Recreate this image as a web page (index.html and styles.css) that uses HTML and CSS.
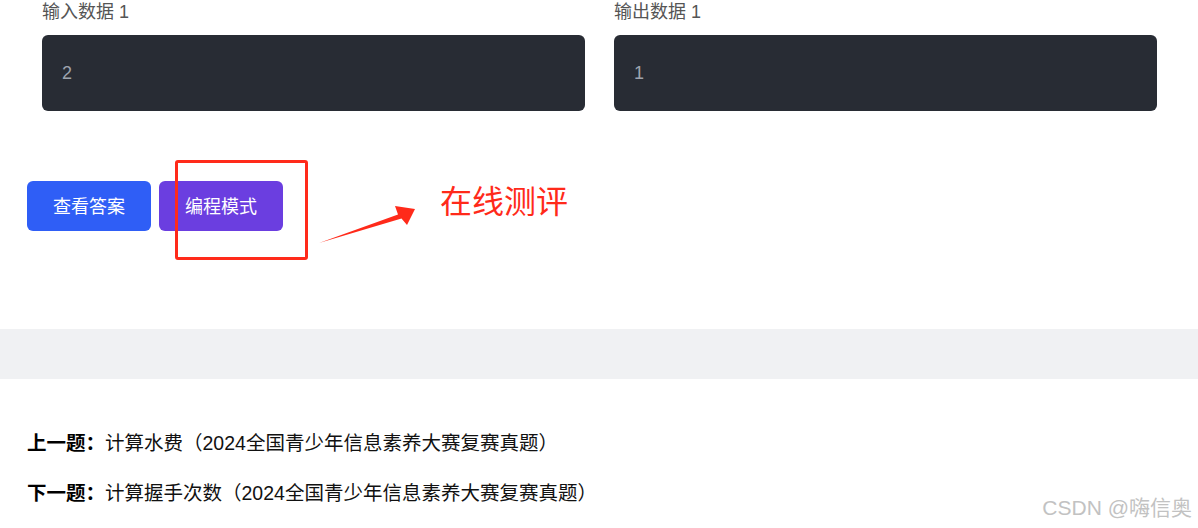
FILE: index.html
```html
<!DOCTYPE html>
<html lang="zh-CN">
<head>
    <meta charset="UTF-8">
    <meta name="viewport" content="width=device-width, initial-scale=1.0">
    <title>计算握手次数</title>
    <link rel="stylesheet" href="styles.css">
</head>
<body>

    <div class="samples">
        <div class="sample">
            <div class="sample-label">输入数据 1</div>
            <div class="sample-box">2</div>
        </div>
        <div class="sample">
            <div class="sample-label">输出数据 1</div>
            <div class="sample-box">1</div>
        </div>
    </div>

    <div class="actions">
        <button class="btn btn-answer">查看答案</button>
        <button class="btn btn-code">编程模式</button>

        <!-- 截图上的标注 -->
        <div class="mark-box"></div>
        <svg class="mark-arrow" width="100" height="44" viewBox="0 0 100 44">
            <path d="M1 38 L80 9.5 L77 1 L97 4 L89 20 L83.5 13.5 Z" fill="#ff2a1a"/>
        </svg>
        <div class="mark-text">在线测评</div>
    </div>

    <div class="divider"></div>

    <div class="nav">
        <div class="nav-item"><b>上一题：</b>计算水费（2024全国青少年信息素养大赛复赛真题）</div>
        <div class="nav-item"><b>下一题：</b>计算握手次数（2024全国青少年信息素养大赛复赛真题）</div>
    </div>

    <div class="watermark">CSDN @嗨信奥</div>

</body>
</html>
```

FILE: styles.css
```css
body {
    margin: 0;
    font-family: 'Liberation Sans', 'Noto Sans CJK SC', sans-serif;
    color: #000;
    background: #fff;
    position: relative;
    height: 528px;
    overflow: hidden;
}

.samples {
    display: grid;
    grid-template-columns: 1fr 1fr;
    gap: 29px;
    padding: 0 41px 0 42px;
}

.sample-label {
    font-size: 18px;
    line-height: 24px;
    color: #555;
    margin-bottom: 11px;
}

.sample-box {
    height: 76px;
    line-height: 76px;
    padding: 0 20px;
    background: #282c34;
    border-radius: 6px;
    color: #9ea3ad;
    font-size: 18px;
}

.actions {
    position: relative;
    display: flex;
    gap: 8px;
    padding: 0 27px;
    margin-top: 70px;
}

.btn {
    width: 124px;
    height: 50px;
    padding-bottom: 3px;
    border: none;
    border-radius: 6px;
    color: #fff;
    font-family: 'Noto Sans CJK SC', sans-serif;
    font-size: 18px;
    cursor: pointer;
}

.btn-answer {
    background: #2f5ef6;
}

.btn-code {
    background: #6b3ee0;
}

.mark-box {
    position: absolute;
    left: 175px;
    top: -21px;
    width: 127px;
    height: 94px;
    border: 3px solid #ff2a1a;
    border-radius: 3px;
}

.mark-arrow {
    position: absolute;
    left: 318px;
    top: 24px;
}

.mark-text {
    position: absolute;
    left: 440px;
    top: -4px;
    font-family: 'Noto Sans CJK SC', sans-serif;
    font-size: 32px;
    line-height: 44px;
    color: #ff2a1a;
}

.divider {
    margin-top: 98px;
    height: 50px;
    background: #f0f1f3;
}

.nav {
    padding: 39px 27px 0;
}

.nav-item {
    font-size: 19.5px;
    line-height: 50px;
    color: #111;
}

.nav-item b {
    color: #000;
}

.watermark {
    position: absolute;
    right: 6px;
    bottom: 7px;
    font-size: 21px;
    color: #c2c2c2;
}
```
